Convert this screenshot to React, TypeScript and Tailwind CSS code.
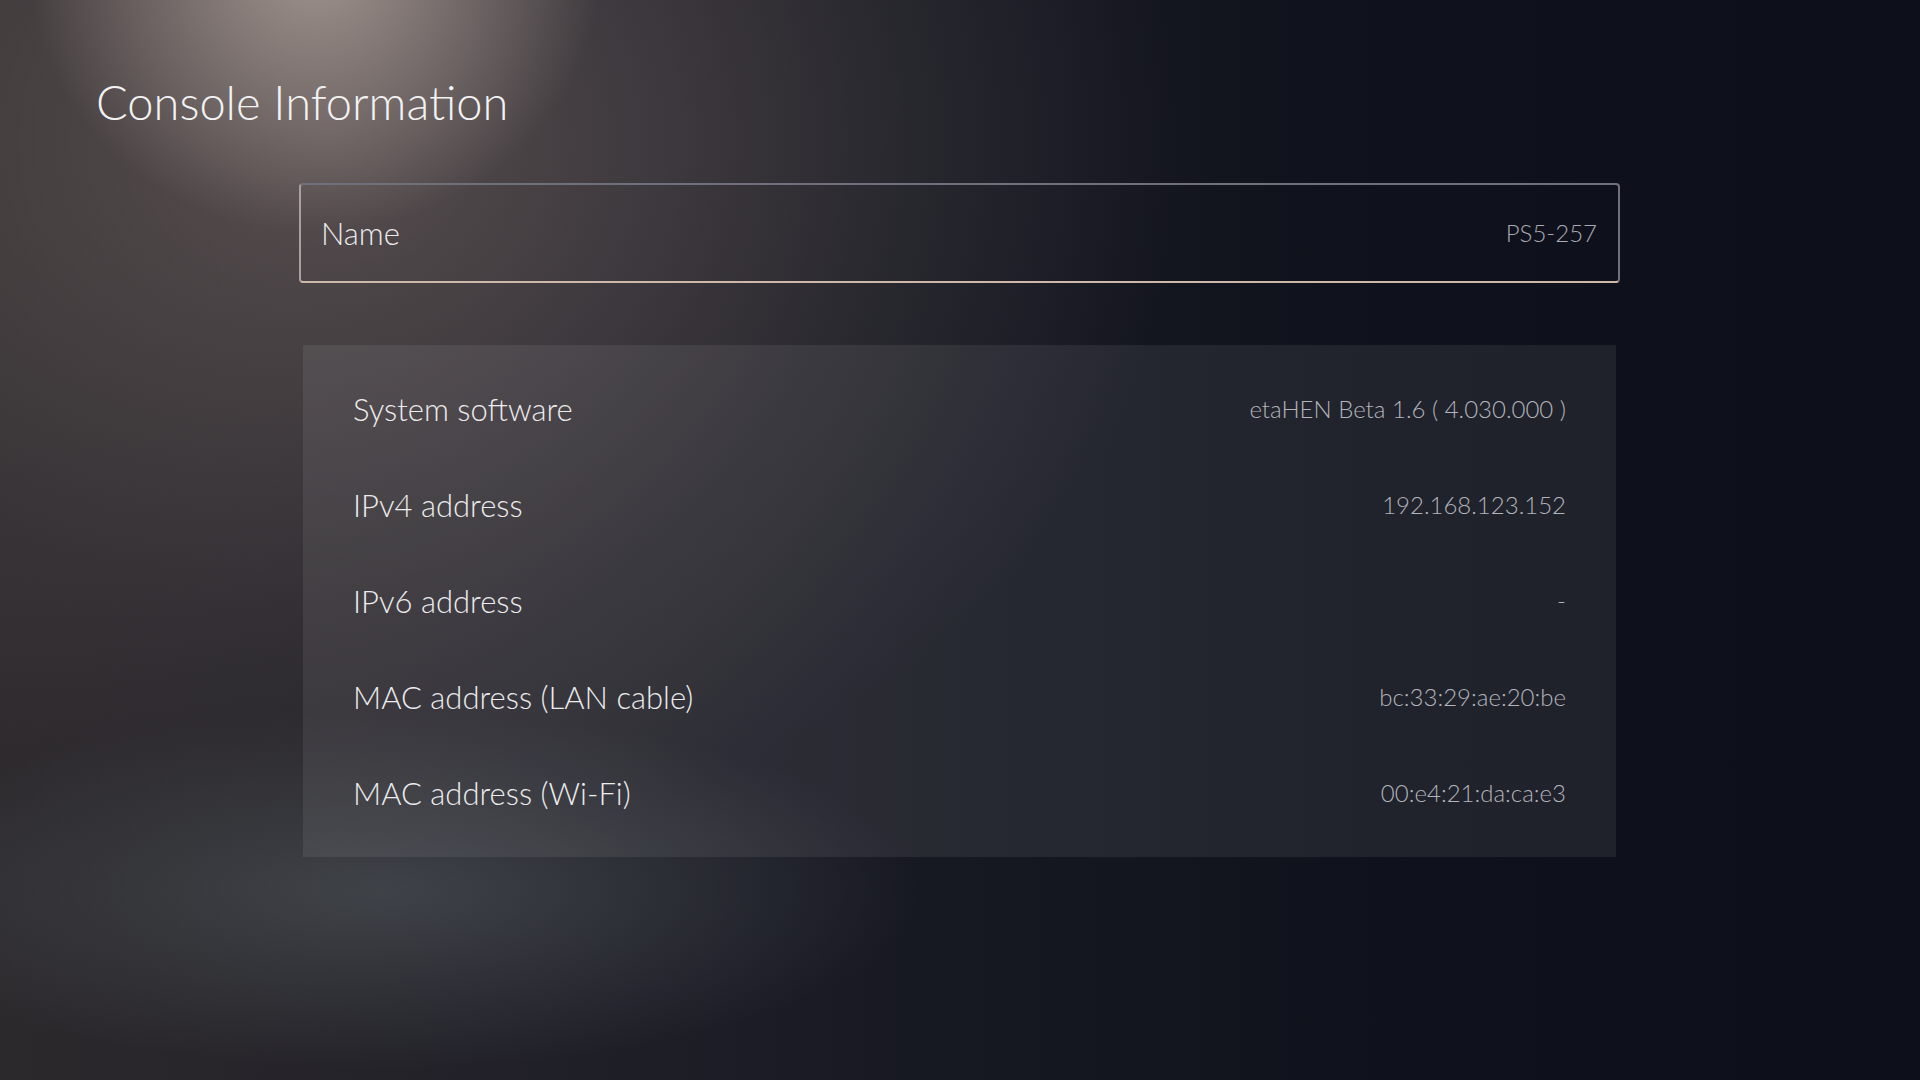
export default function App() {
  const rows = [
    { label: 'System software', value: 'etaHEN Beta 1.6 ( 4.030.000 )' },
    { label: 'IPv4 address', value: '192.168.123.152' },
    { label: 'IPv6 address', value: '-' },
    { label: 'MAC address (LAN cable)', value: 'bc:33:29:ae:20:be' },
    { label: 'MAC address (Wi-Fi)', value: '00:e4:21:da:ca:e3' },
  ];

  return (
    <div
      className="w-full h-[1080px] overflow-hidden bg-[#0e111b] bg-[radial-gradient(ellipse_360px_340px_at_315px_-40px,rgba(195,180,172,0.72),transparent_80%),radial-gradient(ellipse_1150px_950px_at_330px_140px,rgba(120,106,103,0.6),rgba(84,77,79,0.28)_50%,transparent_75%),radial-gradient(ellipse_720px_240px_at_380px_890px,rgba(85,93,97,0.55),transparent_75%),linear-gradient(90deg,#2c292c_0%,#222129_25%,#171922_48%,#0f121c_72%,#0d101a_100%)] font-['Lato','Open_Sans',sans-serif] font-light"
    >
      <h1 className="pl-[96px] pt-[79px] text-[47px] leading-none text-[#f2f2f2] font-light">
        Console Information
      </h1>

      <div className="ml-[299px] mt-[57px] w-[1321px] h-[100px] rounded-[4px] border-2 border-[#6f707b] border-b-[#cdb8aa] border-l-[#a9a0a0] flex items-center justify-between pl-[20px] pr-[21px]">
        <span className="text-[31px] text-[#ececec]">Name</span>
        <span className="text-[24px] text-[#a9a9b2]">PS5-257</span>
      </div>

      <div className="ml-[303px] mt-[62px] w-[1313px] bg-white/[0.075] py-4 px-[50px]">
        {rows.map((row) => (
          <div key={row.label} className="h-[96px] flex items-center justify-between">
            <span className="text-[31px] text-[#ececec]">{row.label}</span>
            <span className="text-[24px] text-[#b3b3bb]">{row.value}</span>
          </div>
        ))}
      </div>
    </div>
  );
}
